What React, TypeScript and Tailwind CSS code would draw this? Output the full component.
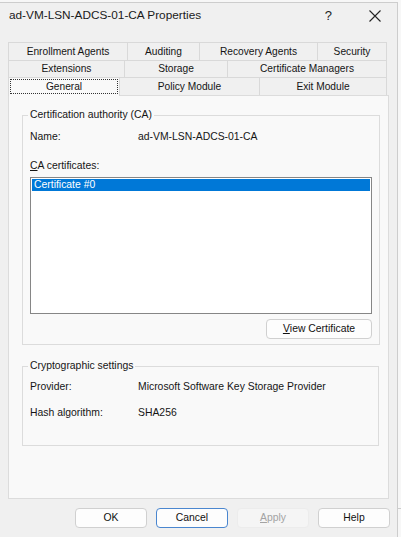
import React from "react";

const tabRows: { label: string; w: string }[][] = [
  [
    { label: "Enrollment Agents", w: "w-[120px]" },
    { label: "Auditing", w: "w-[72px]" },
    { label: "Recovery Agents", w: "w-[118px]" },
    { label: "Security", w: "w-[69px]" },
  ],
  [
    { label: "Extensions", w: "w-[117px]" },
    { label: "Storage", w: "w-[103px]" },
    { label: "Certificate Managers", w: "w-[159px]" },
  ],
];

const Tab = ({ label, w, first }: { label: string; w: string; first?: boolean }) => (
  <div
    className={`${w} flex h-full items-center justify-center border-t border-r border-[#d9d9d9] bg-[#f0f0f0] ${
      first ? "border-l" : ""
    }`}
  >
    {label}
  </div>
);

const Button = ({
  children,
  primary,
  disabled,
}: {
  children: React.ReactNode;
  primary?: boolean;
  disabled?: boolean;
}) => (
  <button
    className={`flex h-[20px] w-[72px] items-center justify-center rounded-[4px] border text-[10.4px] ${
      disabled
        ? "border-[#ececec] bg-[#f5f5f5] text-[#a3a3a3]"
        : primary
        ? "border-[#4a86cf] bg-[#fdfdfd] text-[#111]"
        : "border-[#d0d0d0] bg-[#fdfdfd] text-[#111]"
    }`}
  >
    {children}
  </button>
);

const Row = ({ label, value, className = "" }: { label: string; value: string; className?: string }) => (
  <div className={`flex leading-[14px] ${className}`}>
    <span className="w-[108px]">{label}</span>
    <span>{value}</span>
  </div>
);

export default function App() {
  return (
    <div className="flex h-[537px] w-[401px] bg-[#f7f7f7] pt-[2px] font-['Liberation_Sans',Arial,sans-serif] text-[10.4px] text-[#151515]">
      <div className="flex h-[535px] w-[398px] flex-col border-t border-r border-[#cdcdcd] bg-[#f0f0f0]">
        {/* title bar */}
        <div className="flex h-[26px] items-center pl-[9px]">
          <span className="text-[11.8px] text-[#1a1a1a]">ad-VM-LSN-ADCS-01-CA Properties</span>
          <span className="ml-auto text-[13px] text-[#222]">?</span>
          <svg className="ml-[37px] mr-[16px]" width="12" height="12" viewBox="0 0 12 12">
            <path d="M0.5 0.5L11.5 11.5M11.5 0.5L0.5 11.5" stroke="#222" strokeWidth="1.1" />
          </svg>
        </div>

        {/* tab strip */}
        <div className="ml-[8px] mt-[13px] flex flex-col text-[10.2px]">
          <div className="flex h-[18px]">
            {tabRows[0].map((t, i) => (
              <Tab key={t.label} label={t.label} w={t.w} first={i === 0} />
            ))}
          </div>
          <div className="flex h-[17px]">
            {tabRows[1].map((t, i) => (
              <Tab key={t.label} label={t.label} w={t.w} first={i === 0} />
            ))}
          </div>
          <div className="flex h-[18px] items-end">
            <div className="relative z-10 -mb-[1px] flex h-[19px] w-[112px] items-start justify-center border-t border-l border-r border-[#d9d9d9] bg-[#f9f9f9] px-[1px] pt-[1px]">
              <span className="flex h-[15px] w-full items-center justify-center border border-dotted border-[#333]">
                General
              </span>
            </div>
            <Tab label="Policy Module" w="w-[140px]" />
            <Tab label="Exit Module" w="w-[127px]" />
          </div>
        </div>

        {/* property page */}
        <div className="ml-[8px] flex h-[404px] w-[381px] flex-col border border-[#dcdcdc] bg-[#f9f9f9] pt-[12px]">
          <fieldset className="ml-[13px] flex w-[357px] flex-col border border-[#dcdcdc] px-[7px] pt-[8px] pb-[5px]">
            <legend className="-ml-[2px] px-[2px] leading-[14px]">Certification authority (CA)</legend>
            <Row label="Name:" value="ad-VM-LSN-ADCS-01-CA" />
            <div className="mt-[15px] leading-[14px]">
              <span className="underline underline-offset-[1px]">C</span>A certificates:
            </div>
            <div className="mt-[4px] h-[137px] w-[342px] border border-[#868686] bg-white p-[1px]">
              <div className="flex h-[12px] items-center bg-[#0078d7] pl-[2px] leading-[12px] text-white">
                Certificate #0
              </div>
            </div>
            <button className="mt-[5px] flex h-[20px] w-[106px] items-center justify-center self-end rounded-[4px] border border-[#d0d0d0] bg-[#fdfdfd] text-[#111]">
              <span className="underline underline-offset-[1px]">V</span>iew Certificate
            </button>
          </fieldset>

          <fieldset className="ml-[13px] mt-[14px] flex w-[357px] flex-col border border-[#dcdcdc] px-[7px] pt-[7px] pb-[25px]">
            <legend className="-ml-[2px] px-[2px] leading-[14px]">Cryptographic settings</legend>
            <Row label="Provider:" value="Microsoft Software Key Storage Provider" />
            <Row label="Hash algorithm:" value="SHA256" className="mt-[12px]" />
          </fieldset>
        </div>

        {/* dialog buttons */}
        <div className="ml-[75px] mt-[9px] flex gap-[9px]">
          <Button>OK</Button>
          <Button primary>Cancel</Button>
          <Button disabled>
            <span className="underline underline-offset-[1px]">A</span>pply
          </Button>
          <Button>Help</Button>
        </div>
      </div>
      <div className="flex flex-1 flex-col">
        <div className="mt-[506px] border-t border-[#cdcdcd]" />
      </div>
    </div>
  );
}
